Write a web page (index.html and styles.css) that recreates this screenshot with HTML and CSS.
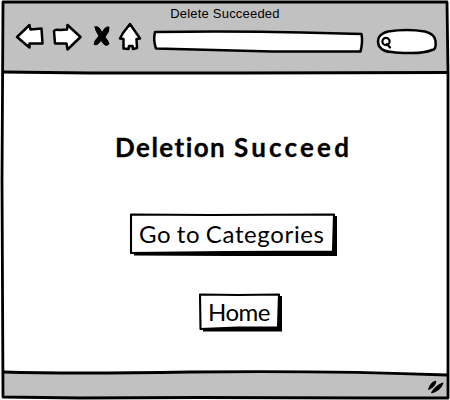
FILE: index.html
```html
<!DOCTYPE html>
<html lang="en">
<head>
<meta charset="utf-8">
<title>Delete Succeeded</title>
<link rel="stylesheet" href="styles.css">
</head>
<body>
<div class="window">
  <svg class="frame" viewBox="0 0 450 400" aria-hidden="true">
    <path class="chrome" d="M3 2 447 2 447 73 3 72Z"/>
    <path class="chrome" d="M3 372C70 374 130 373 190 372 280 371 370 372 447 375L447 398 3 398Z"/>
    <path class="edge" d="M3 2 447 2 448 73 448 398 370 398 200 397.500 80 398 3 397 2 180Z"/>
    <path class="edge" d="M3 72 90 73 240 73 447 72.500M3 372C70 374 130 373 190 372 280 371 370 372 447 375"/>
  </svg>
  <header class="header">
    <div class="title">Delete Succeeded</div>
    <div class="toolbar">
      <svg class="icon back" viewBox="0 0 30 30"><path d="M2 16 14.500 4 15.500 8.500 26.500 7.500 27.500 22.500 14.500 22.500 14.500 26.500Z"/></svg>
      <svg class="icon forward" viewBox="0 0 30 30"><path d="M2 10Q3 8 8 9L15 8.500 15.500 4 28.500 16 15.500 28.500 14.500 22.500 3 22.500Z"/></svg>
      <svg class="icon stop" viewBox="0 0 20 30"><path class="solid" d="M4 6Q8 4 11 12 14 5 18 6 19 10 14 16 18 21 18 23 14 27 10 19 7 25 3 23.500 3 20 8 15 4 9 4 6Z"/></svg>
      <svg class="icon home" viewBox="0 0 24 30"><path d="M12 3 22 17.500 18.500 18 19 27 15 28 14.500 25 11 25 10.500 28 5.500 27.500 5.500 18 2 17.500 5 12Z"/></svg>
      <svg class="icon address" viewBox="0 0 212 26"><path d="M3 4Q80 3 150 4.500L209.500 6Q211 14 208.500 23.500L120 23.500 4 20.500Q1 12 3 4Z"/></svg>
      <svg class="icon search" viewBox="0 0 62 28"><path d="M12 3.500Q31 .5 49 3.500 59 6 59.500 13 60.500 22 56 22 47 25.500 33 25 22 25 16 24 7 24 3 18-1 7 12 3.500Z"/><circle class="lens" cx="10" cy="13.500" r="3.600"/><path class="lens" d="M11 16 14 19.500"/></svg>
    </div>
  </header>
  <main class="content">
    <h1 class="heading">Deletion <span class="wide">Succeed</span></h1>
    <button class="button categories">
      <svg class="outline" viewBox="0 0 208 43" aria-hidden="true"><path class="shadow" d="M5 4 208 3 208 43 100 43 5 42.500Z"/><path class="face" d="M2 1.500 80 2 205 1.500 204 38.500 100 39 2 40Z"/></svg>
      <span class="label">Go to Categories</span>
    </button>
    <button class="button go-home">
      <svg class="outline" viewBox="0 0 84 39" aria-hidden="true"><path class="shadow" d="M5 4 84 3 84 38.500 5 38.500Z"/><path class="face" d="M2 1.500 40 2 81 1.500 80 34.500 40 34.500 2.500 36Z"/></svg>
      <span class="label">Home</span>
    </button>
  </main>
  <footer class="footer">
    <svg class="grip" viewBox="0 0 18 16"><path d="M2 10Q4 4 8.500 2.500 8 7 2 10ZM5 13.500Q9 7 15.500 4.500 13 11 5 13.500Z"/></svg>
  </footer>
</div>
</body>
</html>
```
FILE: styles.css
```css
body { margin: 0; background: #fff; }
.window {
  position: relative;
  width: 450px;
  height: 400px;
  overflow: hidden;
  display: grid;
  grid-template-rows: 73px 1fr 27px;
  color: #000;
}
.frame { position: absolute; inset: 0; width: 450px; height: 400px; }
.chrome { fill: #c1c1c1; }
.edge { fill: none; stroke: #000; stroke-width: 2.8; stroke-linejoin: round; }
.header, .content, .footer { position: relative; }
.title {
  padding-top: 6px;
  height: 15px;
  font: 13px/15px "Liberation Sans", sans-serif;
  letter-spacing: 0.2px;
  text-align: center;
}
.toolbar { display: flex; align-items: flex-start; padding-left: 15px; }
.icon {
  flex: none;
  display: block;
  height: 30px;
  overflow: visible;
  fill: #fff;
  stroke: #000;
  stroke-width: 2.5;
  stroke-linejoin: round;
  stroke-linecap: round;
}
.back { width: 30px; }
.forward { width: 30px; margin-left: 7px; }
.stop { width: 20px; margin-left: 9px; }
.home { width: 24px; margin-left: 7px; }
.address { width: 212px; height: 26px; margin: 7px 0 0 10px; }
.search { width: 62px; height: 28px; margin: 7px 0 0 12px; }
.solid { fill: #000; stroke-width: 1; }
.lens { fill: none; stroke-width: 2.2; }
.content { display: flex; flex-direction: column; align-items: flex-start; }
.heading {
  margin: 57px 0 0 115px;
  height: 34px;
  font: 700 26px/34px Lato, sans-serif;
  letter-spacing: 1.45px;
  -webkit-text-stroke: 0.3px #000;
  white-space: nowrap;
}
.wide { letter-spacing: 3.2px; }
.button {
  position: relative;
  padding: 0;
  border: 0;
  background: none;
  color: #000;
  font: 24px/30px Lato, sans-serif;
  text-align: left;
  white-space: nowrap;
}
.categories { width: 208px; height: 43px; margin: 49px 0 0 129px; padding: 0 0 2px 10px; letter-spacing: 0.63px; word-spacing: -1.2px; }
.go-home { width: 84px; height: 39px; margin: 37px 0 0 198px; padding: 0 0 2px 10px; letter-spacing: -0.5px; }
.outline { position: absolute; inset: 0; width: 100%; height: 100%; }
.shadow { fill: #000; }
.face { fill: #fff; stroke: #000; stroke-width: 2.1; stroke-linejoin: round; }
.label { position: relative; }
.footer { display: flex; justify-content: flex-end; align-items: flex-start; padding: 6px 5px 0 0; box-sizing: border-box; }
.grip { width: 18px; height: 16px; fill: #000; stroke: #000; stroke-width: 1.7; stroke-linejoin: round; }
```
